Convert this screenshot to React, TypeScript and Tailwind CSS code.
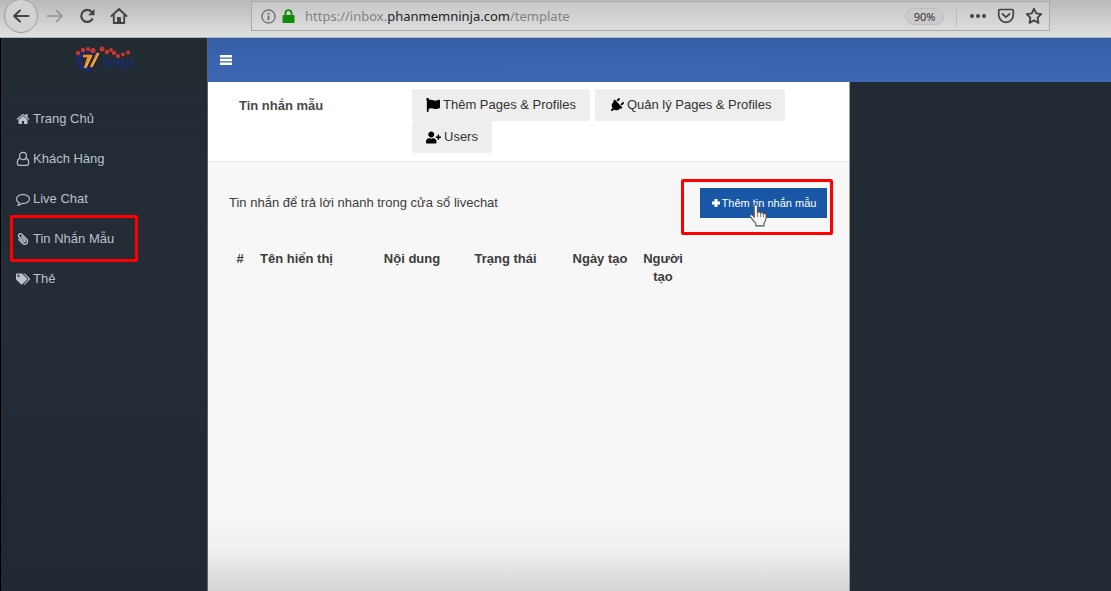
import React from "react";
import { FaFlag, FaPaperclip, FaPlug, FaTags, FaUserPlus } from "react-icons/fa";

const navItems = [
  { label: "Trang Chủ", icon: <HomeSolid /> },
  { label: "Khách Hàng", icon: <UserOutline /> },
  { label: "Live Chat", icon: <CommentOutline /> },
  { label: "Tin Nhắn Mẫu", icon: <FaPaperclip className="size-3 -scale-x-100" />, marked: true },
  { label: "Thẻ", icon: <FaTags className="size-[14px]" /> },
];

function HomeSolid() {
  return (
    <svg viewBox="0 0 1792 1792" className="size-[14px]" fill="currentColor" aria-hidden="true">
      <path d="M1472 992v480q0 26-19 45t-45 19h-384v-384h-256v384h-384q-26 0-45-19t-19-45v-480q0-1 .5-3t.5-3l575-474 575 474q1 2 1 6zm223-69l-62 74q-8 9-21 11h-3q-13 0-21-7l-692-577-692 577q-12 8-24 7-13-2-21-11l-62-74q-8-10-7-23.5t11-21.5l719-599q32-26 76-26t76 26l244 204v-195q0-14 9-23t23-9h192q14 0 23 9t9 23v408l219 182q10 8 11 21.5t-7 23.5z" />
    </svg>
  );
}

function UserOutline() {
  return (
    <svg viewBox="0 0 14 16" className="h-4 w-[14px]" fill="none" stroke="currentColor" strokeWidth="1.2" aria-hidden="true">
      <rect x="3.600" y="1.400" width="6.800" height="7.200" rx="3.300" />
      <path d="M4.300 7.200C2.200 7.800 1.300 9.800 1.300 12c0 1.400.9 2.300 2.200 2.300h7c1.300 0 2.200-.9 2.200-2.300 0-2.200-.9-4.200-3-4.800" />
    </svg>
  );
}

function CommentOutline() {
  return (
    <svg viewBox="0 0 1792 1792" className="size-[14px]" fill="currentColor" stroke="currentColor" strokeWidth="30" aria-hidden="true">
      <path d="M896 384q-204 0-381.5 69.5t-282 187.5-104.5 255q0 112 71.5 213.5t201.5 175.5l87 50-27 96q-24 91-70 172 152-63 275-171l43-38 57 6q69 8 130 8 204 0 381.5-69.5t282-187.5 104.5-255-104.5-255-282-187.5-381.5-69.5zm896 512q0 174-120 321.5t-326 233-450 85.5q-70 0-145-8-198 175-460 242-49 14-114 22h-5q-15 0-27-10.5t-16-27.5v-1q-3-4-.5-12t2-10 4.5-9.500l6-9 7-8.500 8-9q7-8 31-34.500t34.500-38 31-39.500 32.500-51 27-59 26-76q-157-89-247.500-220t-90.500-281q0-174 120-321.500t326-233 450-85.500 450 85.500 326 233 120 321.500z" />
    </svg>
  );
}

function PlusBold() {
  return (
    <svg viewBox="0 0 10 10" className="size-[10px]" fill="currentColor" aria-hidden="true">
      <path d="M3.500 1h3v2.500H9v3H6.500V9h-3V6.500H1v-3h2.500z" />
    </svg>
  );
}

function Logo() {
  return (
    <svg viewBox="0 0 60 28" className="h-7 w-[60px]" role="img" aria-label="Ninja">
      <path d="M15 5C8 4 3 10 4 16c1 6 7 9 13 6" fill="none" stroke="#1b2a70" strokeWidth="4" />
      <path d="M12 5c5-1 9 1 10 5" fill="none" stroke="#1b2a70" strokeWidth="3" />
      <path d="M29 21V12l6 9v-9M39 13v8M43 21v-8l5 8v-8M52 13v8q0 3-3 3M55 21l2-8 2 8" fill="none" stroke="#1b2c62" strokeWidth="2.200" />
      <path d="M8 10h6l-4 12M16 9l-6 13M23 7l-7 14" fill="none" stroke="#f08c28" strokeWidth="2.600" />
      <path d="M17 9l-6 12M24 7l-7 14" fill="none" stroke="#ffc35a" strokeWidth="1" />
      <g fill="#c8382e">
        <circle cx="3" cy="7" r="2.200" /><circle cx="8" cy="4" r="2.200" /><circle cx="13" cy="3" r="2" />
        <circle cx="18" cy="4.500" r="2.600" /><circle cx="27" cy="3" r="2.500" /><circle cx="32" cy="6" r="2.200" />
        <circle cx="36" cy="4" r="1.900" /><circle cx="39" cy="7" r="2.200" /><circle cx="43" cy="10" r="2.100" />
        <circle cx="48" cy="8.500" r="2" /><circle cx="53" cy="6.500" r="2" />
      </g>
    </svg>
  );
}

function BrowserBar() {
  return (
    <div className="flex h-[38px] items-start border-b border-[#a9b3c9] bg-linear-to-b from-[#b9b9b9] to-[#e0e0dd] text-[#444]">
      <div className="flex h-8 w-[251px] shrink-0 items-center pl-1">
        <button aria-label="Back" className="flex size-[34px] shrink-0 items-center justify-center rounded-full border border-[#9b9ba0] bg-[#d2d2d2]">
          <svg viewBox="0 0 18 18" className="size-[18px]" fill="none" stroke="currentColor" strokeWidth="2" strokeLinecap="round" strokeLinejoin="round"><path d="M16.500 9H2M8 3.500L2 9l6 5.500" /></svg>
        </button>
        <button aria-label="Forward" className="ml-2 text-[#929292]">
          <svg viewBox="0 0 18 18" className="size-[18px]" fill="none" stroke="currentColor" strokeWidth="1.700" strokeLinecap="round" strokeLinejoin="round"><path d="M1.500 9H16M10.500 3.500L16 9l-5.500 5.500" /></svg>
        </button>
        <button aria-label="Reload" className="ml-[14px]">
          <svg viewBox="0 0 18 18" className="size-[18px]" fill="none" stroke="currentColor" strokeWidth="2.200" strokeLinecap="round"><path d="M14.300 12.200A6 6 0 1 1 13.800 5" /><path d="M16.500 2v6.300h-6.300z" fill="currentColor" stroke="none" /></svg>
        </button>
        <button aria-label="Home" className="ml-[14px]">
          <svg viewBox="0 0 18 18" className="size-[18px]" fill="none" stroke="currentColor" strokeWidth="1.900" strokeLinejoin="round" strokeLinecap="round"><path d="M1.500 9L9 2l7.500 7M3.800 8.500V16h10.400V8.500" /><path d="M7.500 15.500v-5h3v5z" fill="currentColor" strokeWidth="1" /></svg>
        </button>
      </div>
      <div className="mt-px flex h-[30px] min-w-0 flex-1 items-center border border-[#aaa] bg-linear-to-b from-[#c8c8c8] to-[#dcdcdc] pr-[6px] pl-[9px]">
        <svg viewBox="0 0 16 16" className="size-[15px] shrink-0" fill="none" stroke="#666" strokeWidth="1.300" aria-hidden="true"><circle cx="8" cy="8" r="7" /><path d="M8 7.200V12M8 4v1.800" strokeWidth="1.800" /></svg>
        <svg viewBox="0 0 14 16" className="ml-[6px] h-[15px] w-[13px] shrink-0" aria-hidden="true"><path d="M3.700 8V4.500a3.300 3.300 0 0 1 6.600 0V8" fill="none" stroke="#128a0a" strokeWidth="2" /><rect x="0.500" y="6.500" width="13" height="8.500" rx="1" fill="#128a0a" /></svg>
        <div className="ml-[10px] flex-1 truncate pt-[2px] font-['Noto_Sans','Open_Sans',sans-serif] text-[13px] text-[#818181]">
          https://inbox.<span className="text-[#222]">phanmemninja.com</span>/template
        </div>
        <button className="h-[17px] w-[39px] rounded-full border border-[#bcbcc0] bg-[#cbcbcb] font-['Noto_Sans',sans-serif] text-[11px] leading-[15px] text-[#333]">90%</button>
        <span className="ml-3 h-5 w-px bg-[#bbb]" />
        <button aria-label="Page actions" className="ml-3"><svg viewBox="0 0 18 18" className="size-[18px]" fill="currentColor"><circle cx="3" cy="9" r="2" /><circle cx="9" cy="9" r="2" /><circle cx="15" cy="9" r="2" /></svg></button>
        <button aria-label="Save to Pocket" className="ml-[10px]"><svg viewBox="0 0 18 18" className="size-[18px]" fill="none" stroke="currentColor" strokeWidth="1.700" strokeLinecap="round" strokeLinejoin="round"><path d="M3 2.500h12c.8 0 1.300.5 1.300 1.300V8a7.300 7.300 0 0 1-14.600 0V3.800c0-.8.5-1.300 1.300-1.300z" /><path d="M5.500 7L9 10.200 12.500 7" /></svg></button>
        <button aria-label="Bookmark" className="ml-[10px]"><svg viewBox="0 0 18 18" className="size-[18px]" fill="none" stroke="currentColor" strokeWidth="1.800" strokeLinejoin="round"><path d="M9 1.700l2.200 4.700 5.100.7-3.700 3.600.9 5.200L9 13.400l-4.500 2.500.9-5.200L1.700 7.100l5.100-.7z" /></svg></button>
      </div>
      <div className="w-[61px] shrink-0" />
    </div>
  );
}

function Sidebar() {
  return (
    <aside className="flex w-52 shrink-0 flex-col border-r border-l border-r-[#5b626c] border-l-black bg-linear-to-b from-[#222b32] via-[#242c37] to-[#202831]">
      <a href="#home" className="flex h-[61px] justify-start pt-2 pl-[74px]"><Logo /></a>
      <nav className="flex flex-col text-[13px] text-[#b9c2ca]">
        {navItems.map((item) => (
          <a key={item.label} href={"#" + item.label} className="relative flex h-10 items-center gap-[3px] pl-[14px]">
            <span className="flex w-[15px] shrink-0 justify-center">{item.icon}</span>
            {item.label}
            {item.marked && <span className="pointer-events-none absolute -top-1 left-[9px] h-[47px] w-32 rounded-xs border-3 border-[#ff0000]" />}
          </a>
        ))}
      </nav>
    </aside>
  );
}

function HeaderButton({ icon, children }: { icon: React.ReactNode; children: React.ReactNode }) {
  return (
    <button className="flex h-8 items-center gap-[3px] rounded-[3px] bg-[#efeeee] px-[14px] text-[#333]">
      <span className="text-black">{icon}</span>
      {children}
    </button>
  );
}

function HandCursor() {
  return (
    <svg viewBox="0 0 18 22" className="pointer-events-none absolute top-[15px] left-[48px] h-6 w-5" aria-hidden="true">
      <path d="M5.500 13V3.200c0-2.300 3-2.300 3 0V9c.3-1.200 2.700-1.200 2.900.3.500-1 2.500-.8 2.600.7.700-.8 2.500-.5 2.500 1.100 0 4-.5 5.800-2 7.400V21H7v-2.300c-1.500-1.300-3.300-4-5.300-6.300-.9-1.400.8-2.500 2-1.400z" fill="#f4f4f4" stroke="#555" strokeWidth="1" />
      <path d="M8.500 9v4M11.400 9.500V13M14 10.500V13" stroke="#777" strokeWidth=".8" />
    </svg>
  );
}

export default function App() {
  return (
    <div className="flex min-h-screen flex-col bg-[#222a34] font-['Liberation_Sans',Arial,sans-serif] text-[13px] text-[#3c3c3c]">
      <BrowserBar />
      <div className="flex flex-1">
        <Sidebar />
        <div className="flex min-w-0 flex-1 flex-col">
          <header className="flex h-11 shrink-0 items-center bg-linear-to-b from-[#375fa7] to-[#3e67b5] pl-3">
            <button aria-label="Toggle menu" className="text-white">
              <svg viewBox="0 0 12 10" className="h-[10px] w-3" fill="currentColor"><path d="M0 0h12v2.500H0zM0 3.750h12v2.500H0zM0 7.500h12V10H0z" /></svg>
            </button>
          </header>
          <div className="flex flex-1">
            <main className="flex min-w-0 flex-1 flex-col border-r border-[#9a9fa5] bg-[#f7f7f7]">
              <div className="flex h-20 shrink-0 border-b border-[#e5e5e5] bg-white">
                <h1 className="w-[204px] shrink-0 pt-[14px] pl-[31px] font-bold text-[#4a4a4a]">Tin nhắn mẫu</h1>
                <div className="flex flex-wrap content-start gap-x-[5px] pt-[7px]">
                  <HeaderButton icon={<FaFlag className="size-[14px]" />}>Thêm Pages &amp; Profiles</HeaderButton>
                  <HeaderButton icon={<FaPlug className="size-[15px] rotate-45" />}>Quản lý Pages &amp; Profiles</HeaderButton>
                  <HeaderButton icon={<FaUserPlus className="size-[15px]" />}>Users</HeaderButton>
                </div>
              </div>
              <div className="flex items-center justify-between pt-[26px] pr-[22px] pl-[21px]">
                <p>Tin nhắn để trả lời nhanh trong cửa sổ livechat</p>
                <div className="relative">
                  <button className="flex h-[30px] w-[127px] items-center justify-center gap-px bg-[#1757a6] text-[11px] whitespace-nowrap text-white">
                    <PlusBold />Thêm tin nhắn mẫu
                  </button>
                  <span className="pointer-events-none absolute -top-[9px] -left-[19px] h-14 w-[152px] rounded-xs border-3 border-[#ff0000]" />
                  <HandCursor />
                </div>
              </div>
              <div className="pt-8 pr-[22px] pl-5">
                <table className="w-full table-fixed leading-[18px]">
                  <thead>
                    <tr className="align-top font-bold">
                      <th className="w-6">#</th>
                      <th className="w-[125px] pl-2 text-left">Tên hiển thị</th>
                      <th className="w-[70px] whitespace-nowrap">Nội dung</th>
                      <th className="w-[117px]">Trạng thái</th>
                      <th className="w-[72px] whitespace-nowrap">Ngày tạo</th>
                      <th className="w-[54px] px-1">Người tạo</th>
                      <th aria-label="Thao tác" />
                    </tr>
                  </thead>
                  <tbody />
                </table>
              </div>
              <div className="mt-auto h-20 bg-linear-to-b from-[#f7f7f7] via-[#efefef] to-[#d4d4d4]" />
            </main>
            <aside className="w-[261px] shrink-0" />
          </div>
        </div>
      </div>
    </div>
  );
}
